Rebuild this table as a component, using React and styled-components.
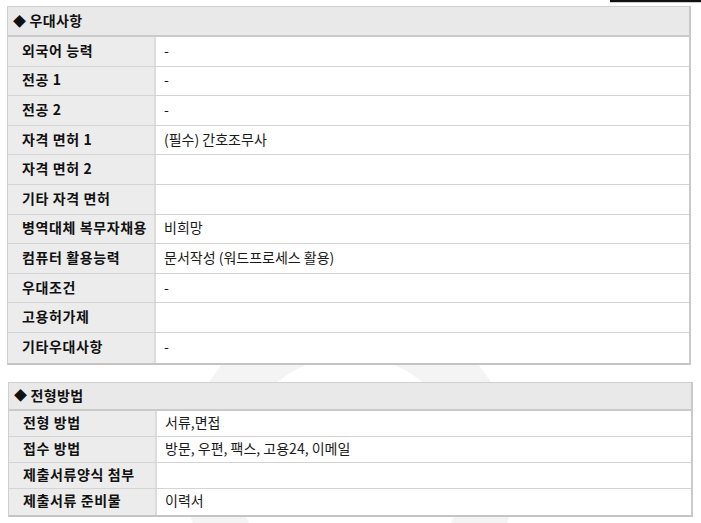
import React from 'react';
import styled, { createGlobalStyle } from 'styled-components';

const GlobalStyle = createGlobalStyle`
  html, body {
    margin: 0;
    padding: 0;
    background: #fff;
  }
  body {
    font-family: "Noto Sans CJK KR", "Noto Sans", sans-serif;
    color: #111;
  }
`;

const Page = styled.div`
  position: relative;
  width: 701px;
  height: 523px;
  overflow: hidden;
  background: #fff;
`;

const Watermark = styled.svg`
  position: absolute;
  left: 0;
  top: 0;
  z-index: 0;
`;

const TopBar = styled.div`
  position: absolute;
  right: 0;
  top: 0;
  width: 91px;
  height: 2px;
  background: #111;
  border-bottom: 1px solid #ccc;
`;

const Content = styled.div`
  position: relative;
  z-index: 1;
  display: flex;
  flex-direction: column;
  gap: 17px;
  padding: 6px 0 0 7px;
`;

const Section = styled.div`
  width: ${(p) => p.$width}px;
  margin-left: ${(p) => p.$offset || 0}px;
  border: 1px solid #cfcfcf;
  border-right: 2px solid #c9c9c9;
  border-bottom: 2px solid #c4c4c4;
  box-sizing: border-box;
`;

const Header = styled.div`
  height: ${(p) => p.$h}px;
  display: flex;
  align-items: center;
  padding: 0 0 2px 5px;
  background: #e9e9e9;
  border-bottom: 2px solid #cacaca;
  box-sizing: border-box;
  font-size: 14px;
  font-weight: 700;
  letter-spacing: 0.4px;
  color: #111;
  gap: 3px;
`;

const Diamond = styled.span`
  font-size: 13px;
`;

const Row = styled.div`
  display: grid;
  grid-template-columns: 148px 1fr;
  height: ${(p) => p.$h}px;
  border-bottom: ${(p) => (p.$last ? 'none' : '1px solid #d4d4d4')};
  box-sizing: border-box;
`;

const Label = styled.div`
  display: flex;
  align-items: center;
  padding: 0 0 3px 14px;
  background: #ececec;
  border-right: 2px solid #dcdcdc;
  font-size: 14px;
  font-weight: 700;
  letter-spacing: 0.6px;
  color: #111;
  white-space: nowrap;
`;

const Value = styled.div`
  display: flex;
  align-items: center;
  padding: 0 0 3px 8px;
  background: #fff;
  font-size: 14px;
  color: #1a1a1a;
  white-space: nowrap;
`;

const benefits = [
  ['외국어 능력', '-'],
  ['전공 1', '-'],
  ['전공 2', '-'],
  ['자격 면허 1', '(필수) 간호조무사'],
  ['자격 면허 2', ''],
  ['기타 자격 면허', ''],
  ['병역대체 복무자채용', '비희망'],
  ['컴퓨터 활용능력', '문서작성 (워드프로세스 활용)'],
  ['우대조건', '-'],
  ['고용허가제', ''],
  ['기타우대사항', '-'],
];

const screening = [
  ['전형 방법', '서류,면접'],
  ['접수 방법', '방문, 우편, 팩스, 고용24, 이메일'],
  ['제출서류양식 첨부', ''],
  ['제출서류 준비물', '이력서'],
];

const InfoTable = ({ title, rows, width, offset, headH, rowH }) => (
  <Section $width={width} $offset={offset}>
    <Header $h={headH}>
      <Diamond>◆</Diamond>
      {title}
    </Header>
    {rows.map(([label, value], i) => (
      <Row key={label} $h={rowH} $last={i === rows.length - 1}>
        <Label>{label}</Label>
        <Value>{value}</Value>
      </Row>
    ))}
  </Section>
);

export default function App() {
  return (
    <Page>
      <GlobalStyle />
      <Watermark width="701" height="523" viewBox="0 0 701 523">
        <circle cx="350" cy="470" r="140" fill="none" stroke="#f4f4f4" strokeWidth="52" />
      </Watermark>
      <TopBar />
      <Content>
        <InfoTable title="우대사항" rows={benefits} width={684} headH={30} rowH={29.6} />
        <InfoTable title="전형방법" rows={screening} width={685} offset={1} headH={28} rowH={26} />
      </Content>
    </Page>
  );
}
